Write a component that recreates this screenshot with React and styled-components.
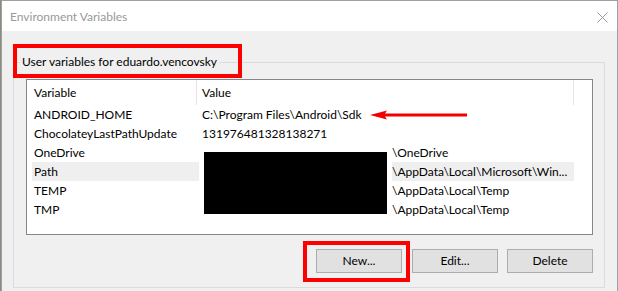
import React from "react";
import styled, { createGlobalStyle } from "styled-components";

const Global = createGlobalStyle`
  html, body { margin: 0; padding: 0; background: #8a8a80; }
  body { font-family: Lato, "Noto Sans", sans-serif; font-size: 12px; color: #000; }
`;

const Window = styled.div`
  position: relative;
  box-sizing: border-box;
  margin-left: 1px;
  width: 617px;
  height: 291px;
  border: 1px solid #a0a0a0;
  border-bottom: none;
  background: #f0f0f0;
  display: flex;
  flex-direction: column;
  overflow: hidden;
`;

const TitleBar = styled.div`
  height: 30px;
  flex: none;
  background: #fff;
  display: flex;
  align-items: center;
  justify-content: space-between;
  padding: 0 9px 0 8px;
`;

const Title = styled.span`
  color: #999;
  font-size: 12px;
  line-height: 16px;
  margin-top: 2px;
`;

const Close = styled.svg`
  display: block;
  margin-top: 2px;
`;

const Body = styled.div`
  flex: 1;
  padding: 23px 12px 0 11px;
`;

const Group = styled.fieldset`
  margin: 0;
  padding: 0;
  min-width: 0;
  border: 1px solid #dcdcdc;
`;

const Legend = styled.legend`
  margin-left: 6px;
  padding: 0 2px;
  font-size: 12px;
  line-height: 16px;
`;

const GroupContent = styled.div`
  padding: 9px 11px 14px 12px;
  display: flex;
  flex-direction: column;
`;

const List = styled.div`
  position: relative;
  height: 156px;
  box-sizing: border-box;
  border: 1px solid #828790;
  background: #fff;
  overflow: hidden;
`;

const Header = styled.div`
  display: flex;
  height: 25px;
`;

const HeaderCell = styled.div`
  box-sizing: border-box;
  width: ${(p) => p.$w}px;
  padding-left: ${(p) => p.$pad}px;
  border-right: 1px solid #e5e5e5;
  display: flex;
  align-items: center;
  line-height: 16px;
`;

const Row = styled.div`
  display: flex;
  height: 19px;
  width: 542px;
  margin-left: 5px;
  background: ${(p) => (p.$selected ? "#efefef" : "transparent")};
`;

const Cell = styled.div`
  box-sizing: border-box;
  width: ${(p) => p.$w}px;
  padding-left: ${(p) => p.$pad}px;
  line-height: 19px;
  white-space: nowrap;
`;

const Masked = styled.span`
  display: inline-block;
  width: 190px;
`;

const Redaction = styled.div`
  position: absolute;
  left: 172px;
  top: 67px;
  width: 183px;
  height: 62px;
  border: 5px solid #fff;
  background: #000;
`;

const Buttons = styled.div`
  margin-top: 14px;
  display: flex;
  justify-content: flex-end;
  gap: 9px;
`;

const Button = styled.button`
  box-sizing: border-box;
  width: 86px;
  height: 24px;
  margin-left: ${(p) => p.$extra || 0}px;
  border: 1px solid #adadad;
  background: #e1e1e1;
  font-family: Lato, "Noto Sans", sans-serif;
  font-size: 12px;
  color: #000;
  padding: 0;
  line-height: 16px;
`;

const Callout = styled.div`
  position: absolute;
  box-sizing: border-box;
  left: ${(p) => p.$x}px;
  top: ${(p) => p.$y}px;
  width: ${(p) => p.$w}px;
  height: ${(p) => p.$h}px;
  border: 4px solid #ff0000;
  pointer-events: none;
`;

const Arrow = styled.svg`
  position: absolute;
  left: 366px;
  top: 108px;
`;

const rows = [
  { name: "ANDROID_HOME", value: "C:\\Program Files\\Android\\Sdk" },
  { name: "ChocolateyLastPathUpdate", value: "131976481328138271" },
  { name: "OneDrive", value: "\\OneDrive", masked: true },
  { name: "Path", value: "\\AppData\\Local\\Microsoft\\Win...", masked: true, selected: true },
  { name: "TEMP", value: "\\AppData\\Local\\Temp", masked: true },
  { name: "TMP", value: "\\AppData\\Local\\Temp", masked: true },
];

export default function App() {
  return (
    <>
      <Global />
      <Window>
        <TitleBar>
          <Title>Environment Variables</Title>
          <Close width="11" height="11" viewBox="0 0 11 11">
            <path d="M0.5 0.5 L10.5 10.5 M10.5 0.5 L0.5 10.5" stroke="#9a9a9a" strokeWidth="1" fill="none" />
          </Close>
        </TitleBar>
        <Body>
          <Group>
            <Legend>User variables for eduardo.vencovsky</Legend>
            <GroupContent>
              <List>
                <Header>
                  <HeaderCell $w={170} $pad={7}>Variable</HeaderCell>
                  <HeaderCell $w={377} $pad={5}>Value</HeaderCell>
                </Header>
                {rows.map((r) => (
                  <Row key={r.name} $selected={r.selected}>
                    <Cell $w={164} $pad={2}>{r.name}</Cell>
                    <Cell $w={378} $pad={6}>
                      {r.masked && <Masked />}
                      {r.value}
                    </Cell>
                  </Row>
                ))}
                <Redaction />
              </List>
              <Buttons>
                <Button>New...</Button>
                <Button $extra={1}>Edit...</Button>
                <Button>Delete</Button>
              </Buttons>
            </GroupContent>
          </Group>
        </Body>
        <Callout $x={11} $y={43} $w={229} $h={34} />
        <Callout $x={301} $y={240} $w={107} $h={41} />
        <Arrow width="100" height="12" viewBox="0 0 100 12">
          <path d="M2 6 L19 1.5 L17 4.5 L99 4.5 L99 7.5 L17 7.5 L19 10.5 Z" fill="#f00000" />
        </Arrow>
      </Window>
    </>
  );
}
